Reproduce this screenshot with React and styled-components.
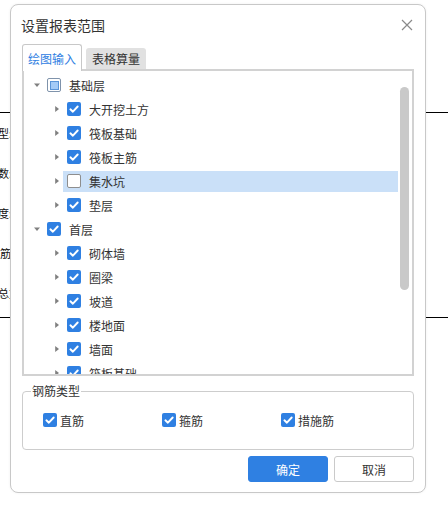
import React from 'react';
import styled, { createGlobalStyle } from 'styled-components';

const GlobalStyle = createGlobalStyle`
  html, body {
    margin: 0;
    padding: 0;
    background: #fff;
  }
  body {
    font-family: "Noto Sans CJK SC", "Noto Sans", sans-serif;
    color: #333;
  }
  * {
    box-sizing: border-box;
  }
`;

const Page = styled.div`
  position: relative;
  width: 448px;
  height: 512px;
  overflow: hidden;
  background: #fff;
`;

/* the form that sits behind the dialog */
const Backdrop = styled.div`
  padding-top: 112px;
`;

const BackdropSection = styled.div`
  border-top: 1px solid #000;
  border-bottom: 1px solid #000;
  padding-bottom: 4px;
`;

const BackdropLabel = styled.div`
  height: 40px;
  line-height: 40px;
  font-size: 11px;
  color: #111;
  white-space: nowrap;
  margin-left: ${(p) => p.$offset}px;
`;

const Dialog = styled.div`
  position: absolute;
  left: 10px;
  top: 4px;
  width: 416px;
  display: flex;
  flex-direction: column;
  padding: 0 11px 10px;
  background: #fff;
  border: 1px solid #c8c8c8;
  border-radius: 8px;
  box-shadow: 0 0 3px rgba(0, 0, 0, 0.06);
`;

const Header = styled.div`
  height: 39px;
  display: flex;
  align-items: center;
  justify-content: space-between;
`;

const Title = styled.div`
  margin-left: -1px;
  font-size: 14px;
  color: #333;
`;

const CloseButton = styled.button`
  width: 14px;
  height: 14px;
  padding: 0;
  border: none;
  background: none;
  display: flex;
  align-items: center;
  justify-content: center;
  cursor: pointer;
`;

const Tabs = styled.div`
  height: 25px;
  display: flex;
  align-items: flex-start;
  gap: 4px;
`;

const Tab = styled.div`
  width: 60px;
  display: flex;
  align-items: center;
  justify-content: center;
  font-size: 12px;
  border-radius: 3px 3px 0 0;
  ${(p) =>
    p.$active
      ? `
    position: relative;
    z-index: 1;
    height: 27px;
    color: #2f80e2;
    background: #fff;
    border: 1px solid #c8c8c8;
    border-bottom: none;
  `
      : `
    margin-top: 4px;
    height: 21px;
    color: #333;
    background: #e1e1e1;
  `}
`;

const TreePanel = styled.div`
  height: 307px;
  display: flex;
  border: 2px solid #d2d2d2;
  overflow: hidden;
`;

const TreeList = styled.div`
  flex: 1;
  padding-top: 2px;
  overflow: hidden;
`;

const Row = styled.div`
  height: 24px;
  display: flex;
  align-items: center;
  padding-left: ${(p) => p.$level * 20 + 7}px;
`;

const Toggle = styled.span`
  width: 11px;
  height: 11px;
  display: flex;
  align-items: center;
  justify-content: center;
  flex-shrink: 0;
`;

const RowContent = styled.div`
  flex: 1;
  height: 21px;
  margin-left: 1px;
  padding-left: 4px;
  display: flex;
  align-items: center;
  background: ${(p) => (p.$selected ? '#cae0f8' : 'transparent')};
`;

const RowLabel = styled.span`
  margin-left: 8px;
  font-size: 12px;
  color: #333;
  white-space: nowrap;
`;

const ScrollTrack = styled.div`
  width: 14px;
  padding: 16px 3px 0 2px;
`;

const ScrollThumb = styled.div`
  width: 9px;
  height: 203px;
  border-radius: 5px;
  background: #c9c9c9;
`;

const Box = styled.span`
  width: 14px;
  height: 14px;
  flex-shrink: 0;
  border-radius: 2px;
  display: flex;
  align-items: center;
  justify-content: center;
  ${(p) =>
    p.$state === 'on'
      ? 'background: #2f80e2;'
      : p.$state === 'mixed'
      ? 'background: #fff; border: 1px solid #7f93ab;'
      : 'background: #fff; border: 1px solid #8e8e8e;'}
`;

const MixedMark = styled.span`
  width: 9px;
  height: 9px;
  background: #a4cbf7;
  border: 1px solid #5b95d8;
`;

const GroupBox = styled.fieldset`
  margin: 7px 0 0;
  padding: 11px 0 19px 8px;
  min-width: 0;
  border: 1px solid #cdcdcd;
  border-radius: 4px;
`;

const GroupLegend = styled.legend`
  padding: 0 1px;
  font-size: 12px;
  line-height: 16px;
  color: #333;
`;

const OptionRow = styled.div`
  height: 20px;
  padding-left: 12px;
  display: flex;
  align-items: center;
`;

const Option = styled.label`
  width: 119px;
  display: flex;
  align-items: center;
  gap: 3px;
  font-size: 12px;
  color: #333;
`;

const Actions = styled.div`
  margin-top: 6px;
  display: flex;
  justify-content: flex-end;
  gap: 6px;
`;

const Button = styled.button`
  width: 80px;
  height: 26px;
  padding: 0;
  border-radius: 3px;
  font-family: inherit;
  font-size: 12px;
  cursor: pointer;
  ${(p) =>
    p.$primary
      ? 'background: #2f80e2; color: #fff; border: 1px solid #2f80e2;'
      : 'background: #fff; color: #333; border: 1px solid #cacaca;'}
`;

const CheckMark = () => (
  <svg width="14" height="14" viewBox="0 0 14 14">
    <path d="M3.4 7.3 L5.9 9.7 L10.7 4.5" fill="none" stroke="#fff" strokeWidth="1.9" strokeLinecap="round" strokeLinejoin="round" />
  </svg>
);

const Checkbox = ({ state }) => (
  <Box $state={state}>
    {state === 'on' && <CheckMark />}
    {state === 'mixed' && <MixedMark />}
  </Box>
);

const Caret = ({ open }) => (
  <svg width="8" height="8" viewBox="0 0 8 8">
    {open ? <path d="M1 2.5 L7 2.5 L4 6 Z" fill="#808080" /> : <path d="M2.2 1 L6 4 L2.2 7 Z" fill="#808080" />}
  </svg>
);

const tree = [
  { level: 0, name: '基础层', state: 'mixed', open: true },
  { level: 1, name: '大开挖土方', state: 'on' },
  { level: 1, name: '筏板基础', state: 'on' },
  { level: 1, name: '筏板主筋', state: 'on' },
  { level: 1, name: '集水坑', state: 'off', selected: true },
  { level: 1, name: '垫层', state: 'on' },
  { level: 0, name: '首层', state: 'on', open: true },
  { level: 1, name: '砌体墙', state: 'on' },
  { level: 1, name: '圈梁', state: 'on' },
  { level: 1, name: '坡道', state: 'on' },
  { level: 1, name: '楼地面', state: 'on' },
  { level: 1, name: '墙面', state: 'on' },
  { level: 1, name: '筏板基础', state: 'on' },
  { level: 1, name: '筏板主筋', state: 'on' },
];

const backdropLabels = [
  { text: '类型:', offset: -13 },
  { text: '参数:', offset: -13 },
  { text: '长度:', offset: -13 },
  { text: '钢筋', offset: -11 },
  { text: '总重', offset: -2 },
];

const App = () => {
  return (
    <Page>
      <GlobalStyle />
      <Backdrop>
        <BackdropSection>
          {backdropLabels.map((l) => (
            <BackdropLabel key={l.text} $offset={l.offset}>
              {l.text}
            </BackdropLabel>
          ))}
        </BackdropSection>
      </Backdrop>

      <Dialog>
        <Header>
          <Title>设置报表范围</Title>
          <CloseButton aria-label="关闭">
            <svg width="12" height="12" viewBox="0 0 12 12">
              <path d="M1 1 L11 11 M11 1 L1 11" stroke="#8a8a8a" strokeWidth="1.2" />
            </svg>
          </CloseButton>
        </Header>

        <Tabs>
          <Tab $active>绘图输入</Tab>
          <Tab>表格算量</Tab>
        </Tabs>

        <TreePanel>
          <TreeList>
            {tree.map((node, i) => (
              <Row key={i} $level={node.level}>
                <Toggle>
                  <Caret open={node.open} />
                </Toggle>
                <RowContent $selected={node.selected}>
                  <Checkbox state={node.state} />
                  <RowLabel>{node.name}</RowLabel>
                </RowContent>
              </Row>
            ))}
          </TreeList>
          <ScrollTrack>
            <ScrollThumb />
          </ScrollTrack>
        </TreePanel>

        <GroupBox>
          <GroupLegend>钢筋类型</GroupLegend>
          <OptionRow>
            <Option>
              <Checkbox state="on" />
              直筋
            </Option>
            <Option>
              <Checkbox state="on" />
              箍筋
            </Option>
            <Option>
              <Checkbox state="on" />
              措施筋
            </Option>
          </OptionRow>
        </GroupBox>

        <Actions>
          <Button $primary>确定</Button>
          <Button>取消</Button>
        </Actions>
      </Dialog>
    </Page>
  );
};

export default App;
